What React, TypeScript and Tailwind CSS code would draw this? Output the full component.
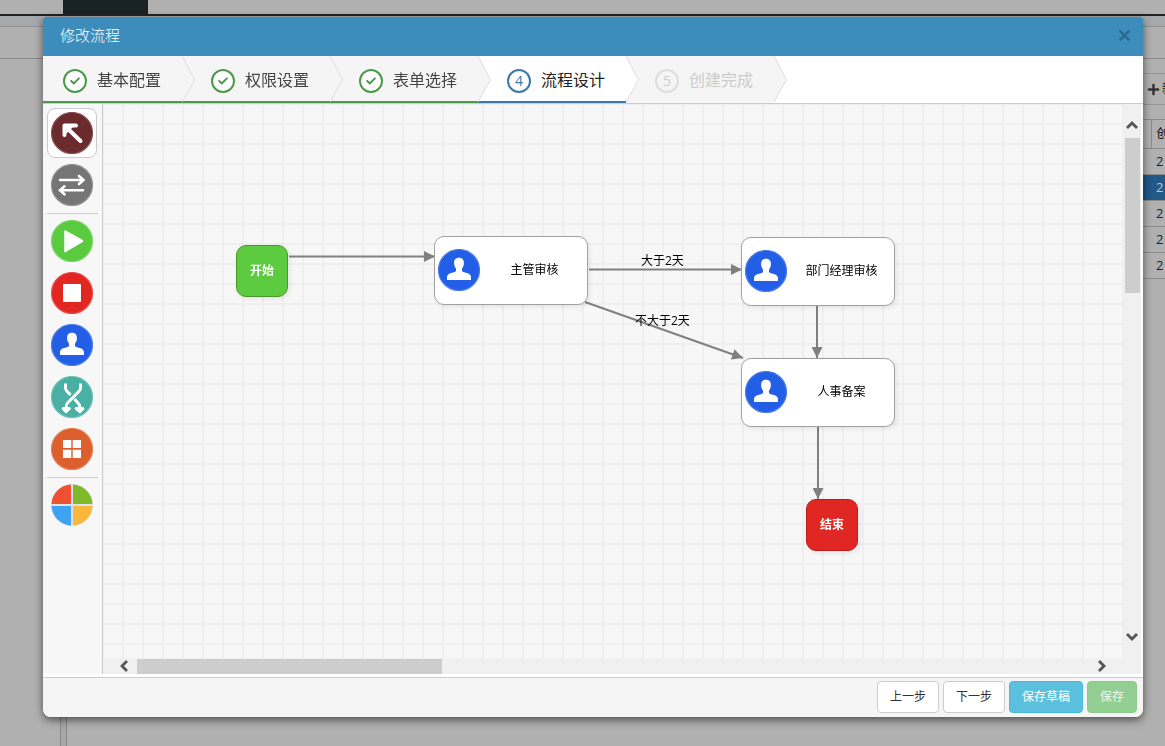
import { useState, type ReactNode } from "react";
import clsx from "clsx";
import { FaCheck, FaPlus } from "react-icons/fa";

type StepState = "done" | "current" | "todo";

const steps: { label: string; state: StepState }[] = [
  { label: "基本配置", state: "done" },
  { label: "权限设置", state: "done" },
  { label: "表单选择", state: "done" },
  { label: "流程设计", state: "current" },
  { label: "创建完成", state: "todo" },
];

function Disc({ fill, ring, children }: { fill: string; ring: string; children: ReactNode }) {
  return (
    <svg viewBox="0 0 42 42" className="size-[42px] shrink-0" aria-hidden="true">
      <circle cx="21" cy="21" r="20.5" fill={fill} stroke={ring} strokeWidth="1.2" />
      {children}
    </svg>
  );
}

function UserIcon() {
  return (
    <Disc fill="#225fe6" ring="#4d7ce8">
      <path
        d="M21 8.800c3.500 0 4.900 2.200 4.900 5.200 0 2.400-.8 4.200-1.900 5.500v2c0 1 .9 1.400 2.200 1.700 4.300 1 6.800 2.200 6.800 5V31H9v-2.800c0-2.800 2.500-4 6.800-5 1.300-.3 2.200-.7 2.200-1.700v-2c-1.100-1.300-1.900-3.100-1.900-5.500 0-3 1.400-5.200 4.900-5.200z"
        fill="#fff"
      />
    </Disc>
  );
}

const tools: { id: string; title: string; divider?: boolean; icon: ReactNode }[] = [
  {
    id: "cursor",
    title: "选择",
    icon: (
      <Disc fill="#6b2a2b" ring="#875152">
        <path
          d="M13.500 13.500H25M13.500 13.500V23M14.500 14.500L29.500 29"
          fill="none"
          stroke="#fff"
          strokeWidth="4"
          strokeLinecap="round"
        />
        <path d="M12 12h12l-3 4 -5 5-4 2z" fill="#fff" />
      </Disc>
    ),
  },
  {
    id: "line",
    title: "连线",
    icon: (
      <Disc fill="#757575" ring="#929292">
        <path
          d="M9 16h23M28 12l4.500 4-4.500 4M32 26.300H10M13.500 22.300L9 26.300l4.500 4"
          fill="none"
          stroke="#fff"
          strokeWidth="2.600"
          strokeLinecap="round"
        />
      </Disc>
    ),
  },
  {
    id: "start",
    title: "开始",
    divider: true,
    icon: (
      <Disc fill="#5acb3e" ring="#7ad666">
        <path d="M14 11l17 9.500q1 .5 0 1L14 31.500z" fill="#fff" stroke="#fff" strokeWidth="1.500" strokeLinejoin="round" />
      </Disc>
    ),
  },
  {
    id: "end",
    title: "结束",
    icon: (
      <Disc fill="#e22622" ring="#e9504c">
        <rect x="12" y="12" width="18" height="18" rx="1" fill="#fff" />
      </Disc>
    ),
  },
  { id: "user", title: "任务", icon: <UserIcon /> },
  {
    id: "branch",
    title: "分支",
    icon: (
      <Disc fill="#4bb0a4" ring="#72c1b8">
        <path
          d="M29.500 7.500v4.500q0 1.800-1.500 3.300L16.500 27q-1.500 1.500-1.500 5"
          fill="none"
          stroke="#fff"
          strokeWidth="3"
        />
        <path
          d="M14.500 7.500v4.500q0 1.800 1.500 3.300l3.500 3.600M23.500 23l3.500 4q2 1.500 2 5"
          fill="none"
          stroke="#fff"
          strokeWidth="3"
        />
        <path
          d="M11.500 31.500h2l1.500 1 1.500-1h2.500l.5 1.500-4 3.800h-1L11 33zM24.500 31.500H27l2 1 1.500-1h2l.5 1.500-3.500 3.800h-1L24 33z"
          fill="#fff"
          stroke="#fff"
          strokeLinejoin="round"
        />
      </Disc>
    ),
  },
  {
    id: "group",
    title: "子流程",
    icon: (
      <Disc fill="#dc5f2d" ring="#e37d54">
        <path d="M12 12h8.300v8H12zM21.700 12H30v8h-8.300zM12 21.700h8.300v8.300H12zM21.700 21.700H30V30h-8.300z" fill="#fff" />
      </Disc>
    ),
  },
  {
    id: "area",
    title: "泳道",
    divider: true,
    icon: (
      <svg viewBox="0 0 42 42" className="size-[42px] shrink-0" aria-hidden="true">
        <circle cx="21" cy="21" r="21" fill="#dde3e6" />
        <path d="M20 20V.5A20.500 20.500 0 0 0 .5 20z" fill="#ee5031" />
        <path d="M22 20V.5A20.500 20.500 0 0 1 41.500 20z" fill="#7fba2a" />
        <path d="M20 22v19.500A20.500 20.500 0 0 1 .5 22z" fill="#40a3f2" />
        <path d="M22 22v19.500A20.500 20.500 0 0 0 41.500 22z" fill="#f8b83c" />
      </svg>
    ),
  },
];

const taskNodes = [
  { label: "主管审核", x: 331, y: 132 },
  { label: "部门经理审核", x: 638, y: 133 },
  { label: "人事备案", x: 638, y: 254 },
];

const endNodes = [
  { label: "开始", x: 133, y: 141, className: "border-[#489a26] bg-[#5ccb40]" },
  { label: "结束", x: 703, y: 395, className: "border-[#b81d1a] bg-[#e02723]" },
];

const lines = [
  { x1: 186, y1: 152.5, x2: 332, y2: 152.5 },
  { x1: 486, y1: 165.5, x2: 639, y2: 165.5 },
  { x1: 482, y1: 198, x2: 640, y2: 254 },
  { x1: 714, y1: 202, x2: 714, y2: 254 },
  { x1: 715, y1: 323, x2: 715, y2: 395 },
];

const lineLabels = [
  { label: "大于2天", x: 538, y: 149 },
  { label: "不大于2天", x: 532, y: 209 },
];

const arrowPaths = {
  up: "M2 10L7 5l5 5",
  down: "M2 4l5 5 5-5",
  left: "M10 2L5 7l5 5",
  right: "M4 2l5 5-5 5",
};

function ScrollArrow({ dir, className }: { dir: keyof typeof arrowPaths; className?: string }) {
  return (
    <svg viewBox="0 0 14 14" className={clsx("size-[14px] shrink-0", className)} aria-hidden="true">
      <path d={arrowPaths[dir]} fill="none" stroke="currentColor" strokeWidth="2.800" />
    </svg>
  );
}

function Backdrop() {
  return (
    <div className="flex h-full flex-col bg-[#b0b0b0] text-xs text-[#222]">
      <div className="h-4 shrink-0 border-b-2 border-[#222]">
        <div className="ml-[63px] h-full w-[85px] bg-[#1a2226]" />
      </div>
      <div className="h-[11px] shrink-0 border-b border-[#8f9396] bg-[#a6a9ab]" />
      <div className="h-8 shrink-0 border-b border-[#8a8a8a]" />
      <div className="flex min-h-0 flex-1">
        <div className="w-[61px] shrink-0 border-r border-[#888]" />
        <div className="w-[6px] shrink-0 border-r border-[#888] bg-[#a8a8a8]" />
        <div className="min-w-0 flex-1 overflow-hidden">
          <div className="h-[15px] border-b border-[#949494]" />
          <div className="flex h-[31px] items-center border-b border-[#949494]">
            <div className="ml-auto flex w-[18px] shrink-0 items-center gap-[2px] overflow-hidden whitespace-nowrap">
              <FaPlus className="size-[13px] shrink-0 text-[#333]" />
              <span>新增</span>
            </div>
          </div>
          <table className="mt-[14px] w-full table-fixed border-collapse">
            <thead>
              <tr className="h-[29px] border-y border-[#8c8c8c]">
                <th className="border-r border-[#8c8c8c]" />
                <th className="w-[14px] overflow-hidden pl-[5px] text-left font-normal whitespace-nowrap text-black">
                  创建时间
                </th>
              </tr>
            </thead>
            <tbody className="text-[13px]">
              {[0, 1, 2, 3, 4].map((row) => (
                <tr
                  key={row}
                  className={clsx("h-[26px] border-b border-[#8c8c8c]", row === 1 && "bg-[#215987] text-[#b5c8d8]")}
                >
                  <td />
                  <td className="overflow-hidden pl-[5px] whitespace-nowrap">2</td>
                </tr>
              ))}
            </tbody>
          </table>
        </div>
      </div>
    </div>
  );
}

function Steps() {
  return (
    <ol className="flex shrink-0 border-b border-[#ccc] bg-white">
      {steps.map(({ label, state }, i) => (
        <li
          key={label}
          className={clsx(
            "relative flex h-[47px] items-center gap-[10px] border-b-2 pt-1 pr-[21px] text-base whitespace-nowrap",
            i === 0 ? "pl-5" : "pl-[29px]",
            state === "done" && "border-[#4b9a4b] bg-[#f5f5f5] text-[#444]",
            state === "current" && "border-[#3879ae] bg-white text-[#222]",
            state === "todo" && "border-[#f5f5f5] bg-[#f5f5f5] text-[#ccc]",
          )}
        >
          <span
            className={clsx(
              "flex size-6 shrink-0 items-center justify-center rounded-full border-2 text-sm leading-none",
              state === "done" && "border-[#4b9a4b] bg-white text-[#4b9a4b]",
              state === "current" && "border-[#3879ae] bg-white text-[#3879ae]",
              state === "todo" && "border-[#ddd] text-[#ccc]",
            )}
          >
            {state === "done" ? <FaCheck className="size-[10px]" /> : i + 1}
          </span>
          <span className="pb-px">{label}</span>
          <svg viewBox="0 0 13 46" className="absolute top-0 left-full z-10 h-[46px] w-[13px]" aria-hidden="true">
            <path d="M0 0L12.500 24L0 46z" fill={state === "current" ? "#fff" : "#f5f5f5"} />
            <path d="M0 0L12.500 24L0 46" fill="none" stroke="#ddd" strokeWidth="1" />
          </svg>
        </li>
      ))}
    </ol>
  );
}

function Canvas() {
  return (
    <div className="relative min-h-0 min-w-0 overflow-hidden bg-[#f7f7f7] bg-[linear-gradient(to_right,#efefef_2px,transparent_2px),linear-gradient(#efefef_2px,transparent_2px)] bg-[size:20px_20px] bg-[position:19px_19px] text-xs text-black">
      <svg className="absolute inset-0 h-full w-full" aria-hidden="true">
        <defs>
          <marker id="arrow" viewBox="0 0 11 11" refX="11" refY="5.5" markerWidth="11" markerHeight="11" markerUnits="userSpaceOnUse" orient="auto">
            <path d="M0 0L11 5.500L0 11z" fill="#808080" />
          </marker>
        </defs>
        {lines.map((line, i) => (
          <line key={i} {...line} stroke="#808080" strokeWidth="2" markerEnd="url(#arrow)" />
        ))}
      </svg>
      {lineLabels.map(({ label, x, y }) => (
        <span key={label} className="absolute leading-4 whitespace-nowrap" style={{ left: x, top: y }}>
          {label}
        </span>
      ))}
      {endNodes.map(({ label, x, y, className }) => (
        <div
          key={label}
          className={clsx(
            "absolute flex size-[52px] items-center justify-center rounded-[10px] border font-bold text-white shadow-[2px_2px_5px_#00000014]",
            className,
          )}
          style={{ left: x, top: y }}
        >
          {label}
        </div>
      ))}
      {taskNodes.map(({ label, x, y }) => (
        <div
          key={label}
          className="absolute flex h-[69px] w-[154px] items-center rounded-[10px] border border-[#a1a1a1] bg-white pb-[2px] pl-[3px] shadow-[2px_2px_5px_#00000014]"
          style={{ left: x, top: y }}
        >
          <UserIcon />
          <span className="flex-1 pl-[2px] text-center">{label}</span>
        </div>
      ))}
    </div>
  );
}

export default function App() {
  const [tool, setTool] = useState("cursor");

  return (
    <div className="h-screen overflow-hidden font-['Open_Sans','Noto_Sans_CJK_SC',sans-serif]">
      <Backdrop />
      <div className="fixed inset-0 flex pt-[17px] pr-[22px] pb-[29px] pl-[43px]">
        <div
          role="dialog"
          aria-labelledby="dialog-title"
          className="flex min-w-0 flex-1 flex-col overflow-hidden rounded-t-xs rounded-b-lg bg-white shadow-[0_3px_9px_#00000090]"
        >
          <header className="flex h-[39px] shrink-0 items-center justify-between bg-[#3c8dbc] pr-3 pb-[2px] pl-[17px]">
            <h1 id="dialog-title" className="text-[15px] font-light text-white">
              修改流程
            </h1>
            <button type="button" aria-label="关闭" className="text-[#2a688e]">
              <svg viewBox="0 0 12 12" className="size-[13px]" aria-hidden="true">
                <path d="M1.500 1.500l9 9M10.500 1.500l-9 9" stroke="currentColor" strokeWidth="2" />
              </svg>
            </button>
          </header>
          <Steps />
          <div className="flex min-h-0 flex-1 pr-[2px] pb-[3px]">
            <div className="flex w-[60px] shrink-0 flex-col gap-[2px] border-r border-[#ccc] bg-[#f7f7f7] pt-1 pl-1">
              {tools.map(({ id, title, divider, icon }) => (
                <div key={id} className="flex flex-col gap-[2px]">
                  {divider && <div className="mt-px mr-1 h-px bg-[#ccc]" />}
                  <button
                    type="button"
                    aria-label={title}
                    aria-pressed={tool === id}
                    onClick={() => setTool(id)}
                    className={clsx(
                      "flex size-[50px] items-center justify-center rounded-lg border",
                      tool === id ? "border-[#ccc] bg-white" : "border-transparent",
                    )}
                  >
                    {icon}
                  </button>
                </div>
              ))}
            </div>
            <div className="grid min-w-0 flex-1 grid-cols-[minmax(0,1fr)_18px] grid-rows-[minmax(0,1fr)_16px] text-[#555]">
              <Canvas />
              <div className="flex flex-col items-center bg-[#f0f0f0] pt-[14px] pb-[14px]">
                <ScrollArrow dir="up" />
                <div className="mt-[6px] h-[155px] w-[15px] bg-[#cdcdcd]" />
                <ScrollArrow dir="down" className="mt-auto" />
              </div>
              <div className="col-span-2 flex items-center bg-[#f0f0f0] pr-8 pl-[14px]">
                <ScrollArrow dir="left" />
                <div className="ml-[6px] h-[15px] w-[305px] bg-[#cdcdcd]" />
                <ScrollArrow dir="right" className="ml-auto" />
              </div>
            </div>
          </div>
          <footer className="flex h-10 shrink-0 items-center justify-end gap-1 border-t border-[#ccc] bg-[#f5f5f5] pr-[6px] pb-px text-xs">
            <button type="button" className="h-8 rounded border border-[#ccc] bg-white px-3 text-[#333]">
              上一步
            </button>
            <button type="button" className="h-8 rounded border border-[#ccc] bg-white px-3 text-[#333]">
              下一步
            </button>
            <button type="button" className="h-8 rounded border border-[#46b8da] bg-[#5bc0de] px-3 text-white">
              保存草稿
            </button>
            <button type="button" disabled className="h-8 rounded border border-[#8cca8c] bg-[#93cf93] px-3 text-[#eef8ee]">
              保存
            </button>
          </footer>
        </div>
      </div>
    </div>
  );
}
